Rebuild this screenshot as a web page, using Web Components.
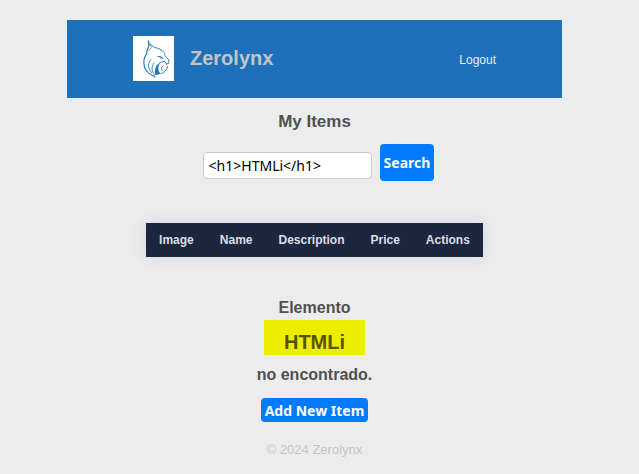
<!DOCTYPE html>
<html lang="en">
<head>
<meta charset="utf-8">
<meta name="viewport" content="width=device-width, initial-scale=1">
<title>Zerolynx - My Items</title>
<style>
    body {
        margin: 0;
        padding: 20px 77px 0 67px;
        background: #ececec;
        color: #505050;
        font-family: "Liberation Sans", Arial, sans-serif;
    }
    h1, h2 {
        margin: 0;
        text-align: center;
    }
    h2 {
        font-size: 17px;
        line-height: 20px;
        margin: 14px 0 12px;
    }
</style>
</head>
<body>
    <site-header brand="Zerolynx">
        <a href="#logout">Logout</a>
    </site-header>
    <main>
        <h2>My Items</h2>
        <search-form value="&lt;h1&gt;HTMLi&lt;/h1&gt;"></search-form>
        <items-table columns="Image,Name,Description,Price,Actions"></items-table>
        <search-message>
            <span>Elemento</span>
            <h1 slot="term">HTMLi</h1>
            <span slot="after">no encontrado.</span>
        </search-message>
        <add-item>Add New Item</add-item>
    </main>
    <site-footer>© 2024 Zerolynx</site-footer>

<script>
class LynxLogo extends HTMLElement {
    constructor() {
        super();
        const shadow = this.attachShadow({ mode: 'open' });

        shadow.innerHTML = `
            <style>
                :host {
                    display: block;
                    width: 41px;
                    height: 45px;
                    background: #fff;
                }
                svg {
                    display: block;
                    width: 100%;
                    height: 100%;
                    fill: none;
                    stroke: #2f7fba;
                    stroke-linecap: round;
                    stroke-linejoin: round;
                }
            </style>
            <svg viewBox="0 0 41 45" role="img" aria-label="Lynx">
                <path d="M15.300 5 L16.500 7.500 L21.500 11.500 C25.500 12 29 14 31 16.500 C32 18 31.500 19.500 33 21 L36 24 L35.500 27.500 L33.500 28" stroke-width="1"/>
                <path d="M15.300 5 L15.800 10 L14 15 C14.500 18 11.500 20 11 24 C10.500 28 11 32 14 35.500 C16 38 19 39 22 41" stroke-width="1.200"/>
                <path d="M16.500 8 L18.500 11.500 L15.500 15" stroke-width="0.700"/>
                <path d="M25 20.500 L28 20.500 L30 22.500 L27 21.800" stroke-width="1"/>
                <path d="M33.500 28 L32 25.500 C28.500 25.500 25.500 27 24 30" stroke-width="1"/>
                <path d="M18 23.500 C14.500 27 14.500 32 18.500 36.500 M21 27 C18 31 18.500 35 21.500 39" stroke-width="0.900"/>
                <path d="M27 27 C22 30 21 35 22.500 39 C24 38.500 26.500 38.500 28 37.500 C25 36.500 24.500 31 27 27 Z" fill="#2574b3" stroke="none"/>
                <path d="M34.500 30.500 C34 34 31.500 37 28.500 37.500 M30 30 C28 31.500 28 33.500 29.500 35" stroke-width="0.900"/>
            </svg>
        `;
    }
}

class SiteHeader extends HTMLElement {
    constructor() {
        super();
        const shadow = this.attachShadow({ mode: 'open' });

        shadow.innerHTML = `
            <style>
                :host {
                    display: block;
                    background: #1e70b8;
                }
                header {
                    display: flex;
                    align-items: center;
                    justify-content: space-between;
                    padding: 16px 66px 17px;
                }
                .brand {
                    display: flex;
                    align-items: center;
                    gap: 16px;
                    color: #c4c4c8;
                    font-size: 20px;
                    font-weight: bold;
                }
                ::slotted(a) {
                    color: #e8eef5;
                    font-size: 12px;
                    text-decoration: none;
                }
            </style>
            <header>
                <div class="brand"><lynx-logo></lynx-logo><span class="name"></span></div>
                <nav><slot></slot></nav>
            </header>
        `;
    }

    static get observedAttributes() {
        return ['brand'];
    }

    attributeChangedCallback(name, oldValue, newValue) {
        this.shadowRoot.querySelector('.name').textContent = newValue;
    }
}

class SearchForm extends HTMLElement {
    constructor() {
        super();
        const shadow = this.attachShadow({ mode: 'open' });

        shadow.innerHTML = `
            <style>
                :host {
                    display: block;
                }
                form {
                    display: flex;
                    justify-content: center;
                    align-items: flex-end;
                    gap: 8px;
                    padding-left: 8px;
                }
                input {
                    box-sizing: border-box;
                    width: 169px;
                    height: 27px;
                    margin: 0 0 2px;
                    padding: 0 5px;
                    border: 1px solid #ccc;
                    border-radius: 4px;
                    background: #fff;
                    color: #000;
                    font: 14px "Noto Sans", sans-serif;
                }
                button {
                    height: 37px;
                    padding: 0 4px;
                    border: 0;
                    border-radius: 4px;
                    background: #007bff;
                    color: #fff;
                    font: bold 14px "Noto Sans", sans-serif;
                }
            </style>
            <form>
                <input type="text" aria-label="Search items">
                <button type="submit">Search</button>
            </form>
        `;
    }

    static get observedAttributes() {
        return ['value'];
    }

    attributeChangedCallback(name, oldValue, newValue) {
        this.shadowRoot.querySelector('input').value = newValue;
    }
}

class ItemsTable extends HTMLElement {
    constructor() {
        super();
        const shadow = this.attachShadow({ mode: 'open' });

        shadow.innerHTML = `
            <style>
                :host {
                    display: block;
                    margin: 42px 0 41px;
                }
                table {
                    margin: 0 auto;
                    border-collapse: collapse;
                    background: #1d263f;
                    box-shadow: 0 0 16px rgba(90, 115, 220, 0.18);
                }
                th {
                    height: 34px;
                    padding: 0 13px;
                    color: #dcdfe3;
                    font-size: 12px;
                }
            </style>
            <table>
                <thead><tr></tr></thead>
            </table>
        `;
    }

    static get observedAttributes() {
        return ['columns'];
    }

    attributeChangedCallback(name, oldValue, newValue) {
        const row = this.shadowRoot.querySelector('tr');
        row.replaceChildren(...newValue.split(',').map((label) => {
            const th = document.createElement('th');
            th.scope = 'col';
            th.textContent = label;
            return th;
        }));
    }
}

class SearchMessage extends HTMLElement {
    constructor() {
        super();
        const shadow = this.attachShadow({ mode: 'open' });

        shadow.innerHTML = `
            <style>
                :host {
                    display: flex;
                    flex-direction: column;
                    align-items: center;
                    font-size: 16px;
                    font-weight: bold;
                    line-height: 20px;
                }
                .term {
                    margin: 2px 0 10px;
                    padding: 11px 20px 1px;
                    background: #eded00;
                    color: #555500;
                }
                ::slotted(h1) {
                    font-size: 20px;
                    line-height: 23px;
                }
            </style>
            <div><slot></slot></div>
            <div class="term"><slot name="term"></slot></div>
            <div><slot name="after"></slot></div>
        `;
    }
}

class AddItem extends HTMLElement {
    constructor() {
        super();
        const shadow = this.attachShadow({ mode: 'open' });

        shadow.innerHTML = `
            <style>
                :host {
                    display: flex;
                    justify-content: center;
                    margin-top: 13px;
                }
                button {
                    height: 24px;
                    padding: 0 4px;
                    border: 0;
                    border-radius: 4px;
                    background: #007bff;
                    color: #fff;
                    font: bold 14px "Noto Sans", sans-serif;
                }
            </style>
            <button type="button"><slot></slot></button>
        `;
    }
}

class SiteFooter extends HTMLElement {
    constructor() {
        super();
        const shadow = this.attachShadow({ mode: 'open' });

        shadow.innerHTML = `
            <style>
                :host {
                    display: block;
                    margin-top: 20px;
                    color: #c4c4c4;
                    font-size: 13px;
                    line-height: 16px;
                    text-align: center;
                }
            </style>
            <footer><slot></slot></footer>
        `;
    }
}

customElements.define('lynx-logo', LynxLogo);
customElements.define('site-header', SiteHeader);
customElements.define('search-form', SearchForm);
customElements.define('items-table', ItemsTable);
customElements.define('search-message', SearchMessage);
customElements.define('add-item', AddItem);
customElements.define('site-footer', SiteFooter);
</script>
</body>
</html>
